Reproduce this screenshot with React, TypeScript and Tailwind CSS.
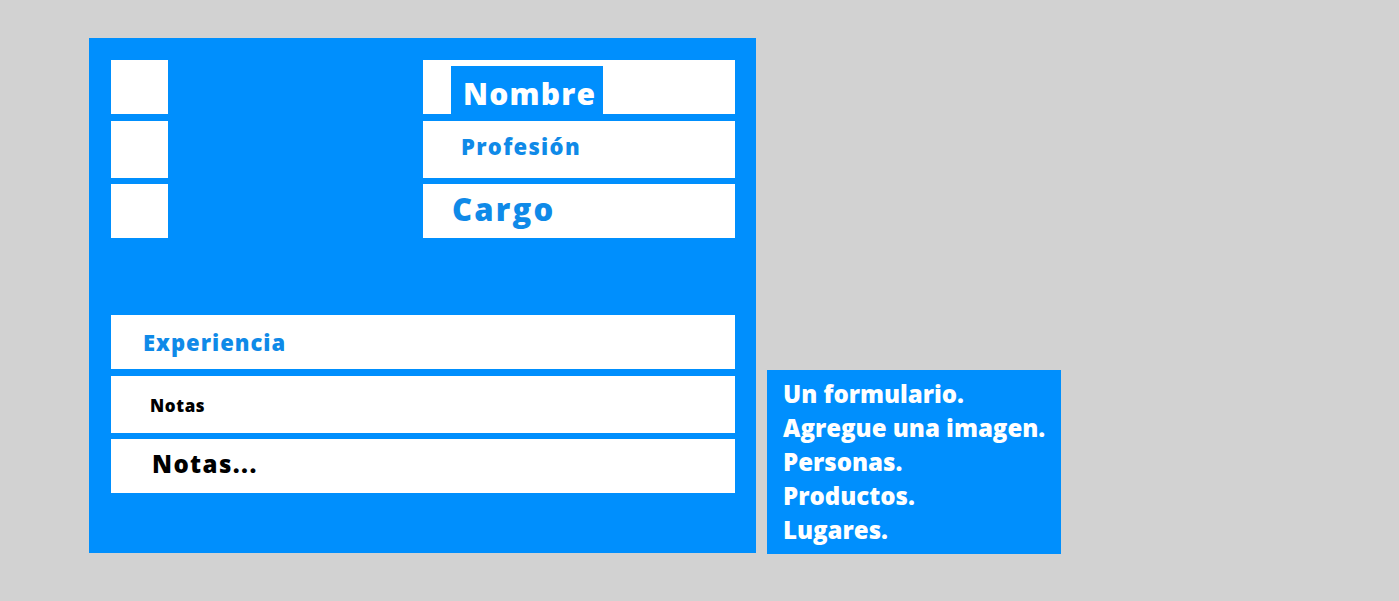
export default function App() {
  const font = { fontFamily: '"Open Sans", "DejaVu Sans", sans-serif' };
  return (
    <div className="w-[1399px] h-[601px] bg-[#d2d2d2] pl-[89px] flex items-end pb-[48px]" style={font}>
      <div className="w-[667px] h-[515px] bg-[#008ffd] pt-[22px] pl-[22px] pr-[21px] flex flex-col">
        <div className="flex justify-between">
          <div className="flex flex-col w-[57px]">
            <div className="h-[54px] bg-white" />
            <div className="h-[57px] bg-white mt-[7px]" />
            <div className="h-[54px] bg-white mt-[6px]" />
          </div>
          <div className="flex flex-col w-[312px]">
            <div className="h-[54px] bg-white flex items-end pl-[28px]">
              <div className="h-[48px] w-[152px] bg-[#008ffd] text-white font-extrabold text-[30px] tracking-[1.2px] leading-none pl-[12px] flex items-center pt-[8px]">Nombre</div>
            </div>
            <div className="h-[57px] bg-white mt-[7px] flex items-center pl-[38px] pb-[6px] text-[#0f8ae8] font-extrabold text-[22px] tracking-[1.3px]">Profesión</div>
            <div className="h-[54px] bg-white mt-[6px] flex items-center pl-[29px] pb-[4px] text-[#0f8ae8] font-extrabold text-[31px] tracking-[2.2px]">Cargo</div>
          </div>
        </div>
        <div className="flex flex-col mt-[77px]">
          <div className="h-[54px] bg-white flex items-center pl-[32px] pt-[1px] text-[#0f8ae8] font-extrabold text-[22px] tracking-[1px]">Experiencia</div>
          <div className="h-[57px] bg-white mt-[7px] flex items-center pl-[39px] pt-[2px] text-black font-extrabold text-[17px] tracking-[0.6px]">Notas</div>
          <div className="h-[54px] bg-white mt-[6px] flex items-center pl-[41px] pb-[4px] text-black font-extrabold text-[24px] tracking-[1.4px]">Notas...</div>
        </div>
      </div>
      <div className="ml-[11px] w-[294px] h-[184px] bg-[#008ffd] text-white font-extrabold text-[24px] leading-[34px] pl-[16px] pt-[7px] mb-[-1px]">
        <div>Un formulario.</div>
        <div>Agregue una imagen.</div>
        <div>Personas.</div>
        <div>Productos.</div>
        <div>Lugares.</div>
      </div>
    </div>
  );
}
